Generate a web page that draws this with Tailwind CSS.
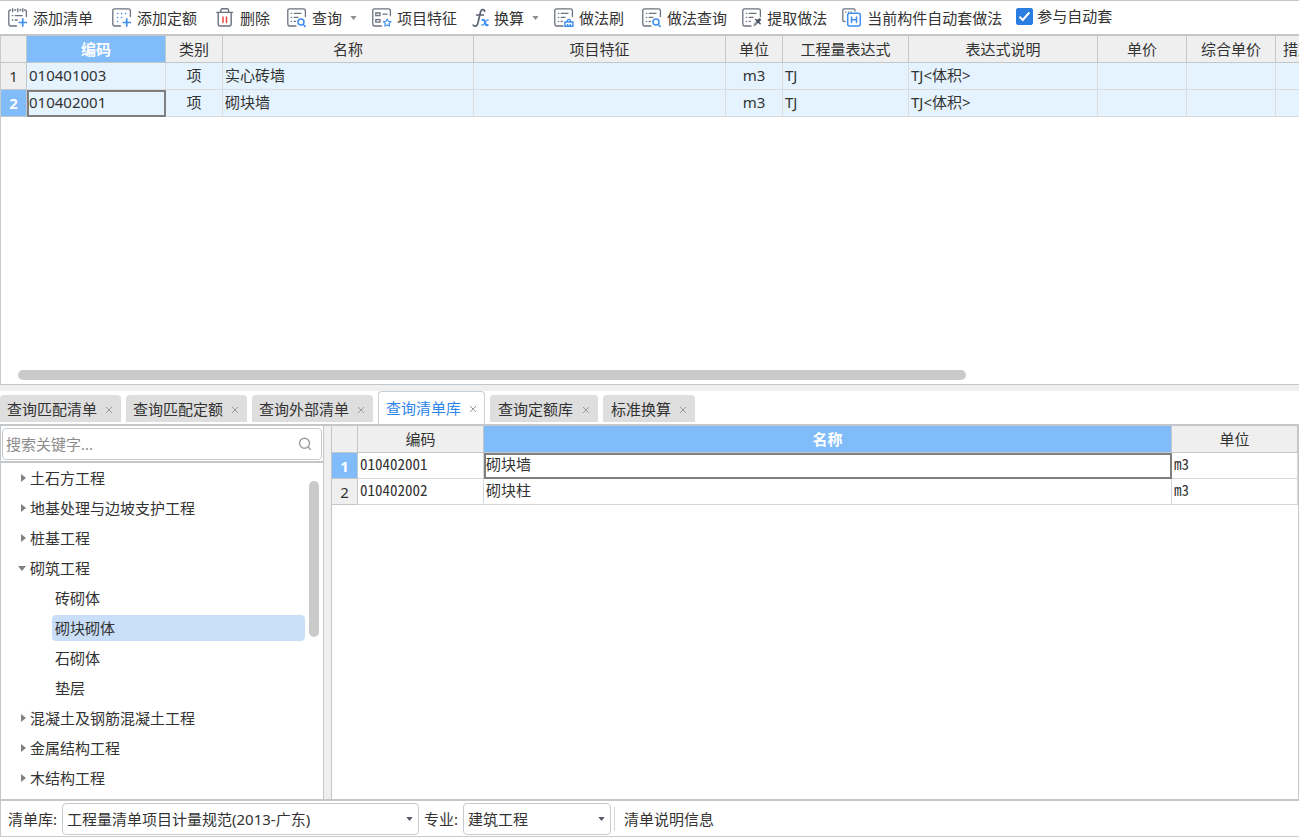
<!DOCTYPE html>
<html lang="zh-CN">
<head>
<meta charset="utf-8">
<meta name="viewport" content="width=device-width, initial-scale=1">
<title>构件做法</title>
<script src="https://cdn.jsdelivr.net/npm/@tailwindcss/browser@4"></script>
</head>
<body class="h-screen overflow-hidden bg-white flex flex-col font-['Noto_Sans','Noto_Sans_CJK_SC',sans-serif] text-[15px] leading-5 text-[#333] whitespace-nowrap">

<svg class="hidden" aria-hidden="true">
  <symbol id="frame" viewBox="0 0 20 20">
    <g fill="none" stroke="#6b7280" stroke-width="1.3" stroke-linecap="round">
      <path d="M9 18H2.7Q.8 18 .8 16V2.8Q.8.8 2.8.8H16.4Q18.4.8 18.4 2.8V8.5"/>
      <path d="M4.300 5.300h.4M7.200 5.300H14M4.300 9.300h.4M7.200 9.300H11M4.300 13.300h.4M7.200 13.300H8.500"/>
    </g>
  </symbol>
  <symbol id="close" viewBox="0 0 8 8"><path d="M1 1l6 6M7 1L1 7" stroke="#9a9a9a" fill="none"/></symbol>
  <symbol id="down" viewBox="0 0 8 5"><path d="M0 0h8L4 5z" fill="currentColor"/></symbol>
  <symbol id="right" viewBox="0 0 5 8"><path d="M0 0v8L5 4z" fill="currentColor"/></symbol>
</svg>

<!-- 上部：做法表 -->
<section class="h-[46%] shrink-0 flex flex-col border-y border-[#c4c7ca]">
  <div class="h-[35px] shrink-0 flex items-center gap-[15px] pl-2 border-b-2 border-[#c4c7ca]" role="toolbar">
    <button class="flex items-center gap-[5px] mr-1">
      <svg class="size-5" viewBox="0 0 20 20" fill="none" stroke="#6b7280" stroke-width="1.3" stroke-linecap="round"><path d="M8.5 18H2.7Q.8 18 .8 16V4Q.8 2 2.6 2M6.600 2h1.200M11.800 2H13M16.600 2Q18.400 2 18.400 4V8.500M4.600.7v3M9.800.7v3M14.800.7v3M4.300 7.600h.4M7.200 7.600h7M4.300 12h.4M7.200 12h2"/><path stroke="#3d8ef0" stroke-width="1.7" stroke-linecap="butt" d="M14.7 10.300v8.500M10.500 14.500h8.500"/></svg>
      添加清单</button>
    <button class="flex items-center gap-[5px] mr-1">
      <svg class="size-5" viewBox="0 0 20 20" fill="none" stroke="#6b7280" stroke-width="1.3" stroke-linecap="round"><path d="M8.5 18H2.7Q.8 18 .8 16V2.8Q.8.8 2.8.8H16.4Q18.4.8 18.4 2.8V8.5"/><path stroke="#3d8ef0" stroke-width="1.5" d="M5.500 5.500h.1M9.500 5.500h.1M13.500 5.500h.1M5.500 9.500h.1M9.500 9.500h.1M5.500 13.500h.1"/><path stroke="#3d8ef0" stroke-width="1.7" stroke-linecap="butt" d="M14.7 10.300v8.500M10.500 14.500h8.500"/></svg>
      添加定额</button>
    <button class="flex items-center gap-1 mr-0.5">
      <svg class="size-5" viewBox="0 0 20 20" fill="none" stroke="#6b7280" stroke-width="1.4" stroke-linecap="round"><path d="M.8 4.400h15.800M4.800 4.200V2.400Q4.800.8 6.400.8h4.600Q12.600.8 12.600 2.400V4.200M2.200 4.600V16Q2.200 18 4.200 18h9Q15.200 18 15.200 16V4.600"/><path stroke="#ee3b3b" stroke-width="1.4" d="M7 9v5.500M10.500 9v5.500"/></svg>
      删除</button>
    <button class="flex items-center gap-[5px]">
      <svg class="size-5" viewBox="0 0 20 20" fill="none"><use href="#frame"/><circle cx="14" cy="14" r="3" stroke="#3d8ef0" stroke-width="1.5"/><path d="M16.200 16.400l2.400 2.600" stroke="#3d8ef0" stroke-width="1.500"/></svg>
      查询<svg class="w-[7px] h-1 ml-[3px] text-[#909090]" viewBox="0 0 8 5"><use href="#down"/></svg></button>
    <button class="flex items-center gap-[5px]">
      <svg class="size-5" viewBox="0 0 20 20" fill="none" stroke="#6b7280" stroke-width="1.3" stroke-linecap="round"><path d="M9.5 18H2.7Q.8 18 .8 16V2.8Q.8.8 2.8.8H16.4Q18.4.8 18.4 2.8V7.500M3.800 5h4.200v2.600H3.800zM3.800 11.600h4.200v2.600H3.800zM11 6.200h4"/><path stroke="#3d8ef0" stroke-width="1.100" stroke-linejoin="round" d="M15.200 10.900l1.200 2.300 2.600.4-1.900 1.900.4 2.600-2.300-1.200-2.400 1.200.5-2.600-1.900-1.900 2.600-.4z"/></svg>
      项目特征</button>
    <button class="flex items-center gap-[5px]">
      <svg class="w-[17px] h-5" viewBox="0 0 17 20" fill="none" stroke-linecap="round"><path stroke="#5b6472" stroke-width="1.7" d="M12.700 3.300Q12.200 1.400 10.400 1.700 8.900 2 8.200 5.200L6 14.600Q5.300 18 3.300 18.200 1.600 18.300 1.200 17M4.600 7h6.800"/><path stroke="#3d8ef0" stroke-width="2" d="M10.400 11.900q1.600-.5 2.200 1.100l.9 2.900q.5 1.700 2.200 1.100"/><path stroke="#3d8ef0" stroke-width="1.200" d="M16.200 11.900q-1.200-.3-2.400 1.400l-1.900 2.800Q11 17.300 9.700 17"/></svg>
      换算<svg class="w-[7px] h-1 ml-[3px] text-[#909090]" viewBox="0 0 8 5"><use href="#down"/></svg></button>
    <button class="flex items-center gap-[5px] mr-[3px]">
      <svg class="size-5" viewBox="0 0 20 20" fill="none"><use href="#frame"/><path d="M10.900 18.300v-4.300h8v4.300zM13.600 18.300v-2.300M16.200 18.300v-2.300M13.200 13.800q0-2.400 1.700-2.400t1.700 2.400" stroke="#3d8ef0" stroke-width="1.400"/></svg>
      做法刷</button>
    <button class="flex items-center gap-[5px]">
      <svg class="size-5" viewBox="0 0 20 20" fill="none"><use href="#frame"/><circle cx="14" cy="14" r="3" stroke="#3d8ef0" stroke-width="1.500"/><path d="M16.200 16.400l2.400 2.600" stroke="#3d8ef0" stroke-width="1.500"/></svg>
      做法查询</button>
    <button class="flex items-center gap-[5px]">
      <svg class="size-5" viewBox="0 0 20 20" fill="none"><use href="#frame"/><path d="M11.200 18.400l1-2.800 3.200-3 1.600 1.600-3.200 3.200z" fill="#8a909c"/><path d="M13.800 11.500l4.300 4.200" stroke="#4b5462" stroke-width="1.600" stroke-linecap="round"/><path d="M15.800 13.500l1.700-1.700" stroke="#4b5462" stroke-width="3" stroke-linecap="round"/></svg>
      提取做法</button>
    <button class="flex items-center gap-[5px]">
      <svg class="size-5" viewBox="0 0 20 20" fill="none" stroke="#6b7280" stroke-width="1.300" stroke-linecap="round"><path d="M3 13.500H2.300Q.8 13.500.8 12V2.300Q.8.8 2.300.8H11.500Q13 .8 13 2.300V3M3.800 4h.1M6.500 4h.1M9.200 4h.1"/><rect x="5.700" y="5.200" width="12.600" height="12.800" rx="2" fill="#fff" stroke="#3d8ef0" stroke-width="1.500"/><path stroke="#3d8ef0" stroke-width="1.500" d="M9.500 9v5.400M14.500 9v5.400M9.500 11.700h5"/></svg>
      当前构件自动套做法</button>
    <label class="flex items-center gap-1 pb-[3px] -ml-px">
      <span class="relative flex">
        <input type="checkbox" checked class="appearance-none size-[17px] rounded-xs border border-[#2a7de1] checked:bg-[#2a7de1] peer">
        <svg class="absolute inset-0 hidden size-[17px] peer-checked:block pointer-events-none" viewBox="0 0 17 17" fill="none"><path d="M3.500 8.800l3.300 3.200 6.500-7.500" stroke="#fff" stroke-width="2"/></svg>
      </span>
      参与自动套</label>
  </div>

  <div class="flex-1 min-h-0 overflow-hidden border-l border-[#c8cbce]">
    <table class="table-fixed w-[1350px] border-separate border-spacing-0 [&_th]:font-normal [&_th]:bg-[#efefef] [&_th]:border-r [&_th]:border-b [&_th]:border-[#c4c7ca] [&_th]:p-0 [&_td]:bg-[#e5f3fe] [&_td]:border-r [&_td]:border-b [&_td]:border-[#d9dcdf] [&_td]:pt-0 [&_td]:pb-0.5 [&_td]:px-0.5 [&_tr]:h-[27px]">
      <colgroup><col class="w-[26px]"><col class="w-[139px]"><col class="w-[57px]"><col class="w-[251px]"><col class="w-[252px]"><col class="w-[57px]"><col class="w-[126px]"><col class="w-[189px]"><col class="w-[89px]"><col class="w-[89px]"><col class="w-[75px]"></colgroup>
      <thead><tr>
        <th></th><th class="bg-[#80bbfa]! font-bold! text-white">编码</th><th>类别</th><th>名称</th><th>项目特征</th><th>单位</th><th>工程量表达式</th><th>表达式说明</th><th>单价</th><th>综合单价</th><th>措施项目</th>
      </tr></thead>
      <tbody>
        <tr><th>1</th><td>010401003</td><td class="text-center">项</td><td>实心砖墙</td><td></td><td class="text-center">m3</td><td>TJ</td><td>TJ&lt;体积&gt;</td><td></td><td></td><td></td></tr>
        <tr><th class="bg-[#80bbfa]! font-bold! text-white">2</th><td class="outline-2 -outline-offset-2 outline-[#7f7f7f]">010402001</td><td class="text-center">项</td><td>砌块墙</td><td></td><td class="text-center">m3</td><td>TJ</td><td>TJ&lt;体积&gt;</td><td></td><td></td><td></td></tr>
      </tbody>
    </table>
  </div>
  <div class="shrink-0 border-l border-[#c8cbce] pl-[17px] pb-1"><div class="h-2.5 w-[74%] rounded-full bg-[#cacaca]"></div></div>
</section>

<div class="h-[6px] shrink-0 bg-[#efefef]"></div>

<!-- 下部：查询页签 -->
<nav class="h-[33px] shrink-0 flex items-end gap-[5px]" role="tablist">
  <button role="tab" class="h-[27px] mb-0.5 flex items-center gap-2 pl-[7px] pr-2 rounded-t bg-[#dedede]">查询匹配清单<svg class="size-2 mt-0.5"><use href="#close"/></svg></button>
  <button role="tab" class="h-[27px] mb-0.5 flex items-center gap-2 pl-[7px] pr-2 rounded-t bg-[#dedede]">查询匹配定额<svg class="size-2 mt-0.5"><use href="#close"/></svg></button>
  <button role="tab" class="h-[27px] mb-0.5 flex items-center gap-2 pl-[7px] pr-2 rounded-t bg-[#dedede]">查询外部清单<svg class="size-2 mt-0.5"><use href="#close"/></svg></button>
  <button role="tab" aria-selected="true" class="h-[33px] flex items-center gap-2 px-[7px] rounded-t border border-b-0 border-[#c8d0d8] text-[#2f86ea]">查询清单库<svg class="size-2 mt-0.5"><use href="#close"/></svg></button>
  <button role="tab" class="h-[27px] mb-0.5 flex items-center gap-[9px] px-2 rounded-t bg-[#dedede]">查询定额库<svg class="size-2 mt-0.5"><use href="#close"/></svg></button>
  <button role="tab" class="h-[27px] mb-0.5 flex items-center gap-2 px-2 rounded-t bg-[#dedede]">标准换算<svg class="size-2 mt-0.5"><use href="#close"/></svg></button>
</nav>

<main class="flex-1 min-h-0 flex border-y-2 border-[#c4c7ca]">
  <aside class="w-[324px] shrink-0 flex flex-col border-x border-[#c4c7ca]">
    <div class="shrink-0 pt-0.5 px-px pb-px border-b-2 border-[#c4c7ca]">
      <label class="h-8 flex items-center pl-[3px] pr-[9px] rounded border border-[#c8cbce]">
        <input type="text" aria-label="搜索关键字" placeholder="搜索关键字..." class="flex-1 min-w-0 outline-none placeholder:text-[#8c8c8c]">
        <svg class="size-3.5" viewBox="0 0 14 14" fill="none" stroke="#a0a0a0" stroke-width="1.500"><circle cx="6.500" cy="6.300" r="5"/><path d="M10.200 10l2.600 2.800"/></svg>
      </label>
    </div>
    <div class="flex-1 min-h-0 flex">
      <ul class="flex-1 min-w-0 overflow-hidden [&>li]:h-[30px] [&>li]:flex [&>li]:items-center [&>li]:pl-5 [&_svg]:mr-1 [&_svg]:text-[#808080]" role="tree">
        <li><svg class="w-[5px] h-2"><use href="#right"/></svg>土石方工程</li>
        <li><svg class="w-[5px] h-2"><use href="#right"/></svg>地基处理与边坡支护工程</li>
        <li><svg class="w-[5px] h-2"><use href="#right"/></svg>桩基工程</li>
        <li class="pl-[17px]!"><svg class="w-2 h-[5px]"><use href="#down"/></svg>砌筑工程</li>
        <li class="pl-[54px]!">砖砌体</li>
        <li class="pl-[51px]!"><span class="flex-1 h-[26px] leading-[26px] mr-px pl-[3px] rounded-sm bg-[#c9dff9]">砌块砌体</span></li>
        <li class="pl-[54px]!">石砌体</li>
        <li class="pl-[54px]!">垫层</li>
        <li><svg class="w-[5px] h-2"><use href="#right"/></svg>混凝土及钢筋混凝土工程</li>
        <li><svg class="w-[5px] h-2"><use href="#right"/></svg>金属结构工程</li>
        <li><svg class="w-[5px] h-2"><use href="#right"/></svg>木结构工程</li>
      </ul>
      <div class="w-[17px] pl-[3px] pt-[18px]"><div class="w-2.5 h-[156px] rounded-full bg-[#cacaca]"></div></div>
    </div>
  </aside>
  <div class="w-[7px] shrink-0 bg-[#efefef]"></div>
  <div class="flex-1 min-w-0 border-x border-[#c4c7ca]">
    <table class="table-fixed w-full border-separate border-spacing-0 [&_th]:font-normal [&_th]:bg-[#efefef] [&_th]:border-r [&_th]:border-b [&_th]:border-[#c4c7ca] [&_th]:p-0 [&_td]:border-r [&_td]:border-b [&_td]:border-[#d4d7da] [&_td]:px-0.5 [&_td]:pt-0 [&_td]:pb-1 [&_td]:font-['Noto_Sans_Mono_CJK_SC','Liberation_Mono','Noto_Sans_CJK_SC',monospace]">
      <colgroup><col class="w-[26px]"><col class="w-[126px]"><col><col class="w-[126px]"></colgroup>
      <thead><tr class="h-[27px]"><th></th><th>编码</th><th class="bg-[#80bbfa]! font-bold! text-white">名称</th><th>单位</th></tr></thead>
      <tbody>
        <tr class="h-[26px]"><th class="bg-[#80bbfa]! font-bold! text-white">1</th><td>010402001</td><td class="outline-2 -outline-offset-2 outline-[#7f7f7f]">砌块墙</td><td>m3</td></tr>
        <tr class="h-[26px]"><th>2</th><td>010402002</td><td>砌块柱</td><td>m3</td></tr>
      </tbody>
    </table>
  </div>
</main>

<footer class="h-9 shrink-0 flex items-center pl-[7px] border-l border-b border-[#c8cbce]">
  <label for="lib" class="mr-[5px]">清单库:</label>
  <span class="relative flex items-center mr-[5px]">
    <select id="lib" class="appearance-none w-[357px] h-8 pl-1 rounded border border-[#c8cbce] bg-white"><option>工程量清单项目计量规范(2013-广东)</option></select>
    <svg class="absolute right-1.5 w-[7px] h-1 text-[#555b66] pointer-events-none" viewBox="0 0 8 5"><use href="#down"/></svg>
  </span>
  <label for="major" class="mr-[5px]">专业:</label>
  <span class="relative flex items-center mr-[3px]">
    <select id="major" class="appearance-none w-[148px] h-8 pl-1 rounded border border-[#c8cbce] bg-white"><option>建筑工程</option></select>
    <svg class="absolute right-1.5 w-[7px] h-1 text-[#555b66] pointer-events-none" viewBox="0 0 8 5"><use href="#down"/></svg>
  </span>
  <span class="w-px h-6 bg-[#d4d7da] mr-[9px]"></span>
  <button>清单说明信息</button>
</footer>
</body>
</html>
